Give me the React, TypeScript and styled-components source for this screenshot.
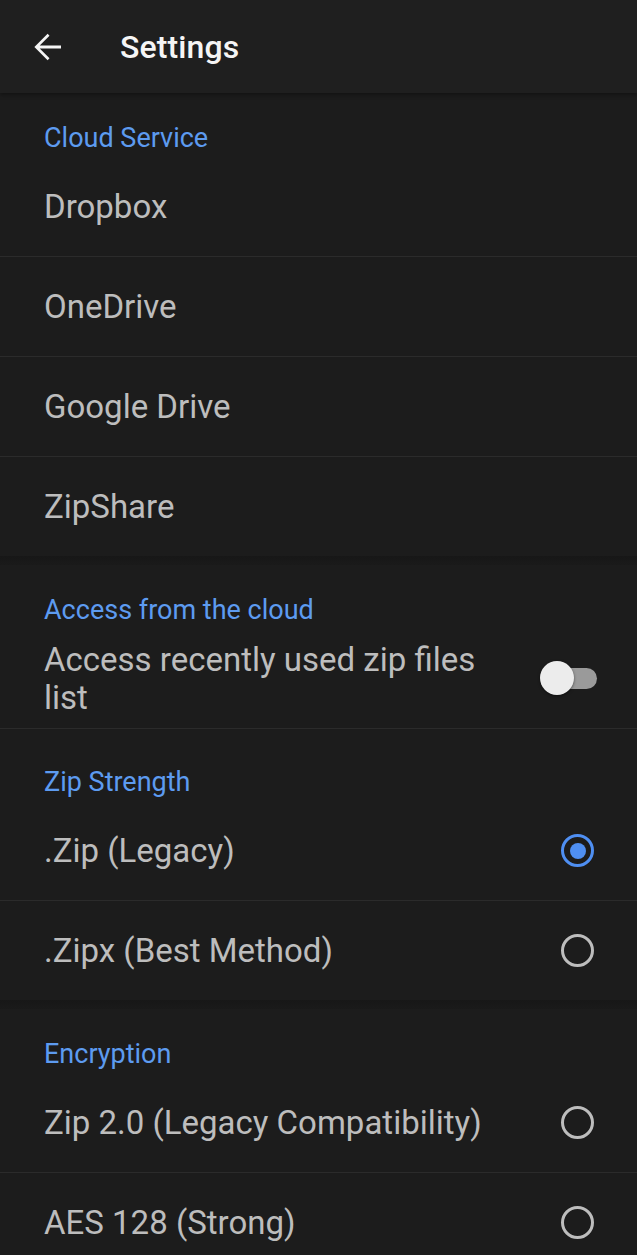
import React from "react";
import styled, { createGlobalStyle } from "styled-components";

const Global = createGlobalStyle`
  html, body { margin: 0; padding: 0; background: #1c1c1c; }
  body { font-family: Roboto, "Noto Sans", Arial, sans-serif; -webkit-font-smoothing: antialiased; }
  * { box-sizing: border-box; }
`;

const Page = styled.div`
  width: 637px;
  min-height: 1255px;
  background: #1c1c1c;
  overflow: hidden;
`;

const TopBar = styled.header`
  height: 93px;
  display: flex;
  align-items: center;
  background: #1f1f1f;
  box-shadow: 0 2px 4px rgba(0, 0, 0, 0.35);
  position: relative;
  z-index: 1;
`;

const BackButton = styled.button`
  width: 42px;
  height: 42px;
  margin-left: 26px;
  padding: 0;
  border: 0;
  background: transparent;
  display: flex;
  align-items: center;
  justify-content: center;
  color: #f5f5f5;
`;

const Title = styled.h1`
  margin: 0 0 0 52px;
  font-size: 32px;
  font-weight: 500;
  color: #f5f5f5;
  letter-spacing: 0.1px;
`;

const Section = styled.section<{ $extraTop?: number }>`
  padding-top: ${(p) => 26 + (p.$extraTop ?? 0)}px;
  background: #1c1c1c;
`;

const Band = styled.div`
  height: 9px;
  background: linear-gradient(#171717, #1a1a1a);
`;

const Category = styled.div`
  padding-left: 44px;
  height: 38px;
  line-height: 38px;
  font-size: 27px;
  color: #5d9bf0;
`;

const Row = styled.div<{ $divider?: boolean }>`
  height: ${(p) => (p.$divider ? 100 : 99)}px;
  display: flex;
  align-items: center;
  padding: 0 40px 0 44px;
  border-bottom: ${(p) => (p.$divider ? "1px solid #2b2b2b" : "0")};
`;

const RowText = styled.div`
  flex: 1;
  font-size: 33px;
  line-height: 38px;
  color: #bdbdbd;
  padding-right: 40px;
`;

const Radio = styled.span<{ $checked?: boolean }>`
  width: 33px;
  height: 33px;
  border-radius: 50%;
  border: 3.5px solid ${(p) => (p.$checked ? "#4f8ff2" : "#bdbdbd")};
  display: flex;
  align-items: center;
  justify-content: center;
  margin-right: 3px;
  &::after {
    content: "";
    width: 16px;
    height: 16px;
    border-radius: 50%;
    background: #4f8ff2;
    display: ${(p) => (p.$checked ? "block" : "none")};
  }
`;

const Switch = styled.span`
  position: relative;
  flex: none;
  width: 41px;
  height: 21px;
  border-radius: 11px;
  background: #9a9a9a;
`;

const Thumb = styled.span`
  position: absolute;
  left: -16px;
  top: -7px;
  width: 34px;
  height: 34px;
  border-radius: 50%;
  background: #ececec;
  box-shadow: 0 1px 3px rgba(0, 0, 0, 0.5);
`;

const ArrowBack = () => (
  <svg width="42" height="42" viewBox="0 0 24 24" fill="currentColor">
    <path d="M20 11.1H7.83l5.59-5.59L12.35 4.45 4.8 12l7.55 7.55 1.07-1.06L7.83 12.9H20z" />
  </svg>
);

export default function App() {
  return (
    <Page>
      <Global />
      <TopBar>
        <BackButton aria-label="Back">
          <ArrowBack />
        </BackButton>
        <Title>Settings</Title>
      </TopBar>

      <Section>
        <Category>Cloud Service</Category>
        <Row $divider><RowText>Dropbox</RowText></Row>
        <Row $divider><RowText>OneDrive</RowText></Row>
        <Row $divider><RowText>Google Drive</RowText></Row>
        <Row><RowText>ZipShare</RowText></Row>
      </Section>
      <Band />

      <Section>
        <Category>Access from the cloud</Category>
        <Row $divider>
          <RowText>Access recently used zip files list</RowText>
          <Switch><Thumb /></Switch>
        </Row>
      </Section>

      <Section $extraTop={8}>
        <Category>Zip Strength</Category>
        <Row $divider>
          <RowText>.Zip (Legacy)</RowText>
          <Radio $checked />
        </Row>
        <Row>
          <RowText>.Zipx (Best Method)</RowText>
          <Radio />
        </Row>
      </Section>
      <Band />

      <Section>
        <Category>Encryption</Category>
        <Row $divider>
          <RowText>Zip 2.0 (Legacy Compatibility)</RowText>
          <Radio />
        </Row>
        <Row>
          <RowText>AES 128 (Strong)</RowText>
          <Radio />
        </Row>
      </Section>
    </Page>
  );
}
